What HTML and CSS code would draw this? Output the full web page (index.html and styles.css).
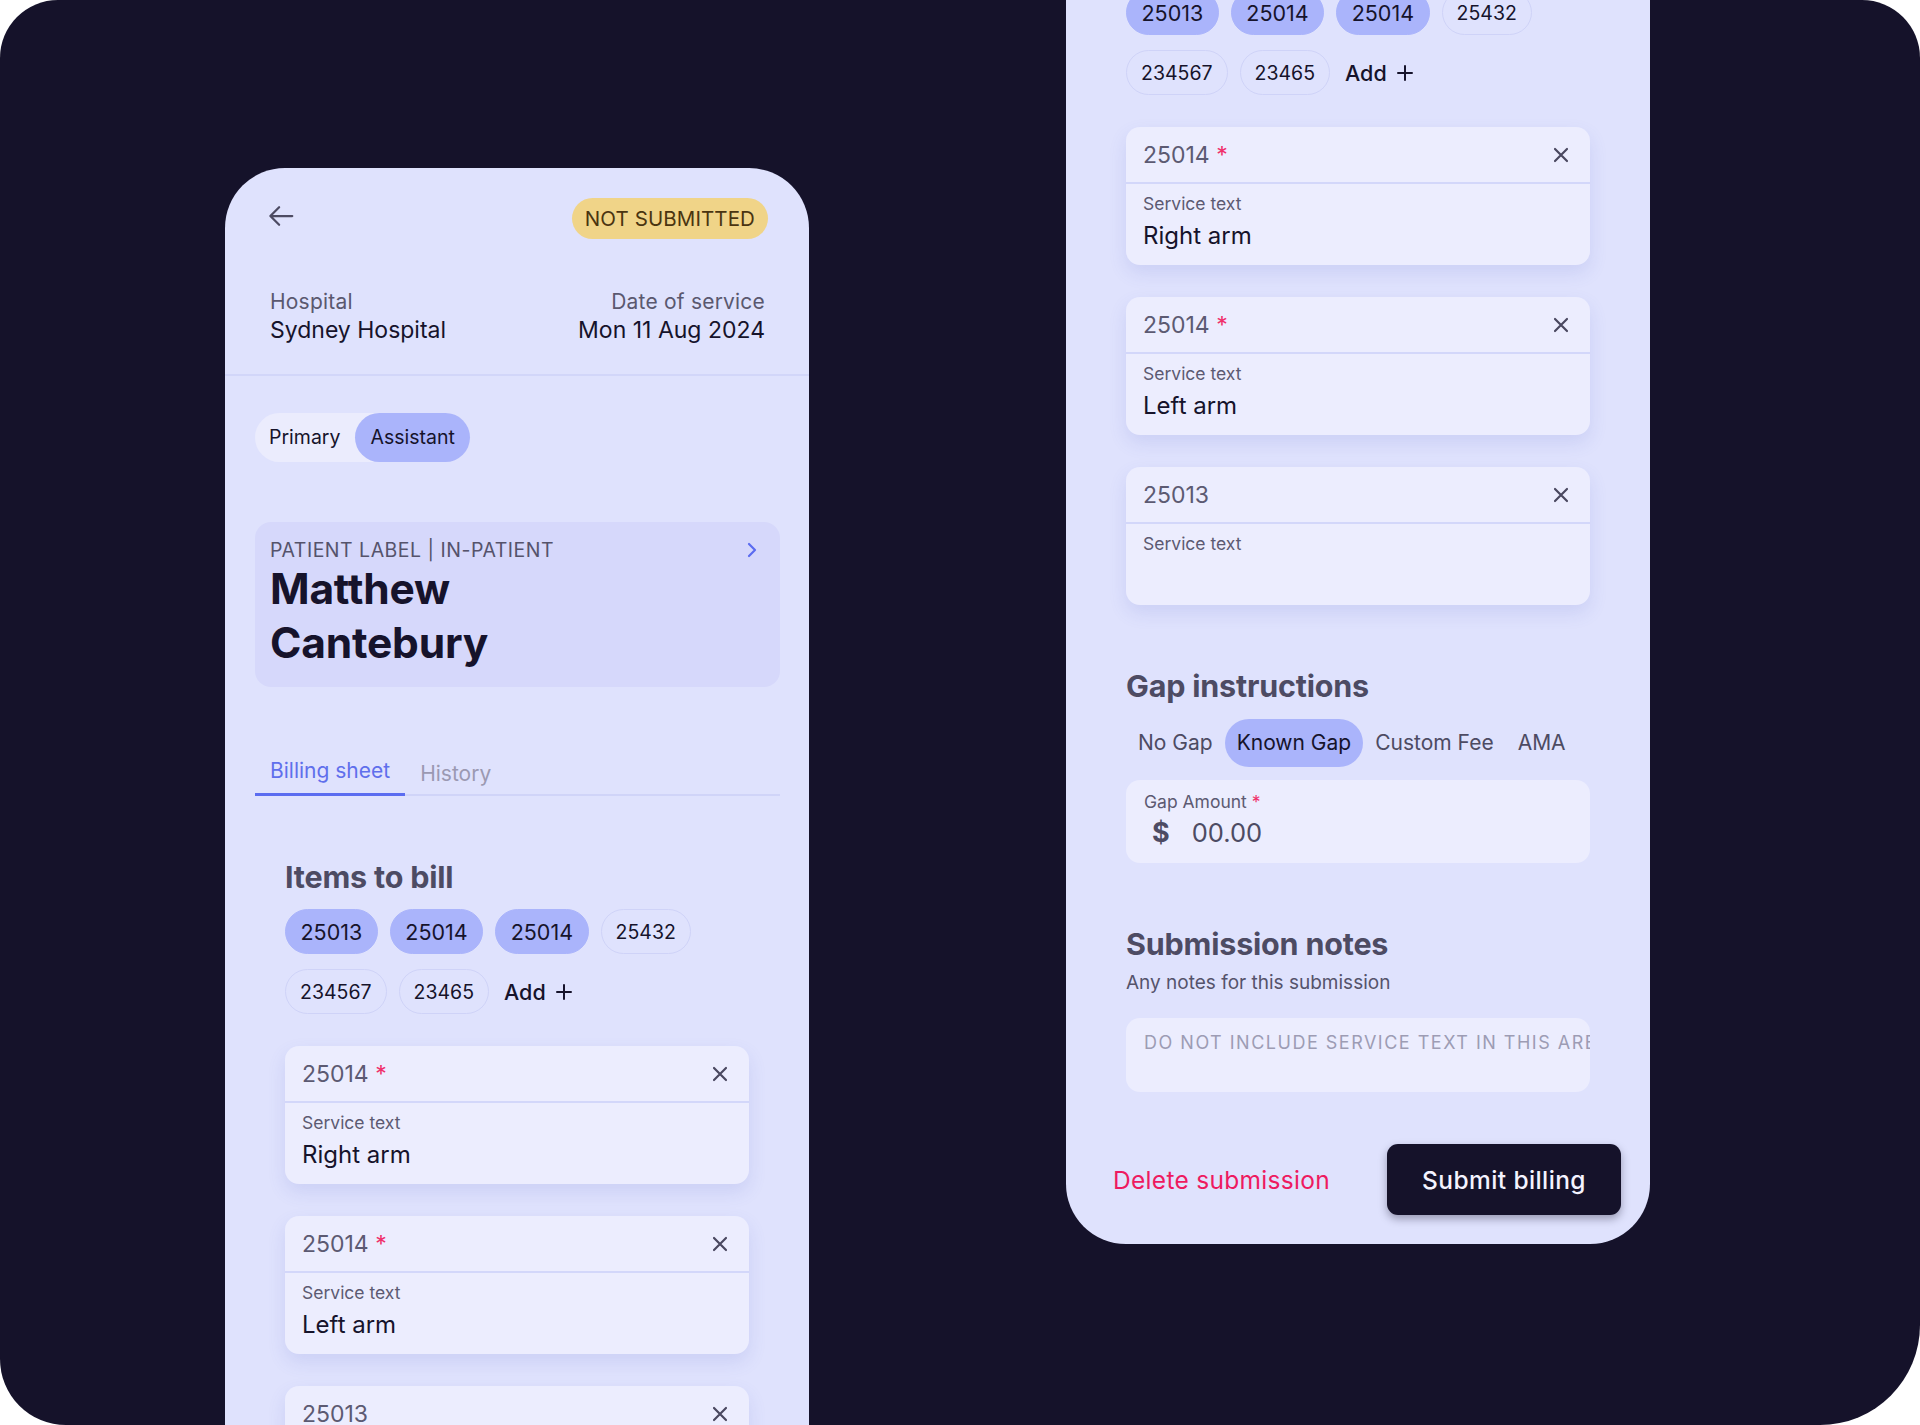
FILE: index.html
```html
<!DOCTYPE html>
<html lang="en">
<head>
    <meta charset="UTF-8">
    <meta name="viewport" content="width=device-width, initial-scale=1.0">
    <title>Billing sheet</title>
    <link rel="stylesheet" href="styles.css">
</head>
<body>
<div class="canvas">

    <!-- screen 1: top of the billing sheet -->
    <div class="phone">
        <header class="top-bar">
            <button class="back-btn" aria-label="Back">
                <svg width="30" height="30" viewBox="0 0 24 24"><path d="M21 12H3.5M10.5 5 3.5 12l7 7" fill="none" stroke="currentColor" stroke-width="1.8" stroke-linecap="round" stroke-linejoin="round"/></svg>
            </button>
            <span class="status">NOT SUBMITTED</span>
        </header>
        <div class="visit-info">
            <div>
                <div class="info-label">Hospital</div>
                <div class="info-value">Sydney Hospital</div>
            </div>
            <div class="align-right">
                <div class="info-label">Date of service</div>
                <div class="info-value">Mon 11 Aug 2024</div>
            </div>
        </div>
        <div class="phone-body">
            <div class="role-toggle">
                <span class="role first">Primary</span>
                <span class="role active">Assistant</span>
            </div>
            <div class="patient-card">
                <div class="patient-meta">
                    <span>PATIENT LABEL | IN-PATIENT</span>
                    <svg class="chevron" width="12" height="18" viewBox="0 0 12 18"><path d="M3 3l6 6-6 6" fill="none" stroke="currentColor" stroke-width="2.2" stroke-linecap="round" stroke-linejoin="round"/></svg>
                </div>
                <div class="patient-name">Matthew<br>Cantebury</div>
            </div>
            <div class="tabs">
                <span class="tab active">Billing sheet</span>
                <span class="tab">History</span>
            </div>

            <section class="section">
                <h2>Items to bill</h2>
                <div class="chips">
                    <span class="chip selected">25013</span>
                    <span class="chip selected">25014</span>
                    <span class="chip selected">25014</span>
                    <span class="chip">25432</span>
                    <span class="chip">234567</span>
                    <span class="chip">23465</span>
                    <span class="chip add">Add <svg width="20" height="20" viewBox="0 0 20 20"><path d="M10 3v14M3 10h14" stroke="currentColor" stroke-width="2" stroke-linecap="round"/></svg></span>
                </div>
                <div class="service-card">
                    <div class="service-head">
                        <span>25014 <span class="req">*</span></span>
                        <svg class="close" width="20" height="20" viewBox="0 0 20 20"><path d="M4 4l12 12M16 4 4 16" stroke="currentColor" stroke-width="2.2" stroke-linecap="round"/></svg>
                    </div>
                    <div class="service-body">
                        <div class="field-label">Service text</div>
                        <div class="field-value">Right arm</div>
                    </div>
                </div>
                <div class="service-card">
                    <div class="service-head">
                        <span>25014 <span class="req">*</span></span>
                        <svg class="close" width="20" height="20" viewBox="0 0 20 20"><path d="M4 4l12 12M16 4 4 16" stroke="currentColor" stroke-width="2.2" stroke-linecap="round"/></svg>
                    </div>
                    <div class="service-body">
                        <div class="field-label">Service text</div>
                        <div class="field-value">Left arm</div>
                    </div>
                </div>
                <div class="service-card">
                    <div class="service-head">
                        <span>25013</span>
                        <svg class="close" width="20" height="20" viewBox="0 0 20 20"><path d="M4 4l12 12M16 4 4 16" stroke="currentColor" stroke-width="2.2" stroke-linecap="round"/></svg>
                    </div>
                    <div class="service-body">
                        <div class="field-label">Service text</div>
                    </div>
                </div>
            </section>
        </div>
    </div>

    <!-- screen 2: same sheet scrolled to the bottom -->
    <div class="phone scrolled">
        <header class="top-bar">
            <button class="back-btn" aria-label="Back">
                <svg width="30" height="30" viewBox="0 0 24 24"><path d="M21 12H3.5M10.5 5 3.5 12l7 7" fill="none" stroke="currentColor" stroke-width="1.8" stroke-linecap="round" stroke-linejoin="round"/></svg>
            </button>
            <span class="status">NOT SUBMITTED</span>
        </header>
        <div class="visit-info">
            <div>
                <div class="info-label">Hospital</div>
                <div class="info-value">Sydney Hospital</div>
            </div>
            <div class="align-right">
                <div class="info-label">Date of service</div>
                <div class="info-value">Mon 11 Aug 2024</div>
            </div>
        </div>
        <div class="phone-body">
            <div class="role-toggle">
                <span class="role first">Primary</span>
                <span class="role active">Assistant</span>
            </div>
            <div class="patient-card">
                <div class="patient-meta">
                    <span>PATIENT LABEL | IN-PATIENT</span>
                    <svg class="chevron" width="12" height="18" viewBox="0 0 12 18"><path d="M3 3l6 6-6 6" fill="none" stroke="currentColor" stroke-width="2.2" stroke-linecap="round" stroke-linejoin="round"/></svg>
                </div>
                <div class="patient-name">Matthew<br>Cantebury</div>
            </div>
            <div class="tabs">
                <span class="tab active">Billing sheet</span>
                <span class="tab">History</span>
            </div>

            <section class="section">
                <h2>Items to bill</h2>
                <div class="chips">
                    <span class="chip selected">25013</span>
                    <span class="chip selected">25014</span>
                    <span class="chip selected">25014</span>
                    <span class="chip">25432</span>
                    <span class="chip">234567</span>
                    <span class="chip">23465</span>
                    <span class="chip add">Add <svg width="20" height="20" viewBox="0 0 20 20"><path d="M10 3v14M3 10h14" stroke="currentColor" stroke-width="2" stroke-linecap="round"/></svg></span>
                </div>
                <div class="service-card">
                    <div class="service-head">
                        <span>25014 <span class="req">*</span></span>
                        <svg class="close" width="20" height="20" viewBox="0 0 20 20"><path d="M4 4l12 12M16 4 4 16" stroke="currentColor" stroke-width="2.2" stroke-linecap="round"/></svg>
                    </div>
                    <div class="service-body">
                        <div class="field-label">Service text</div>
                        <div class="field-value">Right arm</div>
                    </div>
                </div>
                <div class="service-card">
                    <div class="service-head">
                        <span>25014 <span class="req">*</span></span>
                        <svg class="close" width="20" height="20" viewBox="0 0 20 20"><path d="M4 4l12 12M16 4 4 16" stroke="currentColor" stroke-width="2.2" stroke-linecap="round"/></svg>
                    </div>
                    <div class="service-body">
                        <div class="field-label">Service text</div>
                        <div class="field-value">Left arm</div>
                    </div>
                </div>
                <div class="service-card">
                    <div class="service-head">
                        <span>25013</span>
                        <svg class="close" width="20" height="20" viewBox="0 0 20 20"><path d="M4 4l12 12M16 4 4 16" stroke="currentColor" stroke-width="2.2" stroke-linecap="round"/></svg>
                    </div>
                    <div class="service-body">
                        <div class="field-label">Service text</div>
                    </div>
                </div>
            </section>

            <section class="section">
                <h2>Gap instructions</h2>
                <div class="gap-options">
                    <span class="gap-option">No Gap</span>
                    <span class="gap-option active">Known Gap</span>
                    <span class="gap-option">Custom Fee</span>
                    <span class="gap-option">AMA</span>
                </div>
                <div class="amount-field">
                    <div class="field-label">Gap Amount <span class="req">*</span></div>
                    <div class="amount-row">
                        <span class="currency">$</span>
                        <span class="amount">00.00</span>
                    </div>
                </div>
            </section>

            <section class="section">
                <h2>Submission notes</h2>
                <p class="hint">Any notes for this submission</p>
                <div class="notes-box">DO NOT INCLUDE SERVICE TEXT IN THIS AREA</div>
            </section>

            <div class="actions">
                <button class="delete-btn">Delete submission</button>
                <button class="submit-btn">Submit billing</button>
            </div>
        </div>
    </div>

</div>
</body>
</html>
```

FILE: styles.css
```css
* {
    box-sizing: border-box;
    margin: 0;
    padding: 0;
}
html, body {
    background: #fff;
}
body {
    font-family: Inter, "Noto Sans", "DejaVu Sans", sans-serif;
    color: #16132b;
}
button {
    font-family: inherit;
    border: none;
    background: none;
    cursor: pointer;
}
.canvas {
    width: 1920px;
    height: 1425px;
    background-color: #15122a;
    border-radius: 58px 58px 100px 66px;
    overflow: hidden;
    display: flex;
    align-items: flex-start;
    gap: 257px;
    padding-left: 225px;
}
.phone {
    flex: none;
    width: 584px;
    margin-top: 168px;
    background-color: #dfe2fd;
    border-radius: 60px;
}
.phone.scrolled {
    margin-top: -751px;
}

/* header */
.top-bar {
    display: flex;
    justify-content: space-between;
    align-items: center;
    padding: 30px 41px 0 41px;
}
.back-btn {
    display: flex;
    color: #4d4b63;
    height: 41px;
    align-items: center;
    margin-top: -5px;
}
.status {
    height: 41px;
    line-height: 41px;
    padding: 0 13px;
    border-radius: 21px;
    background-color: #f0d488;
    color: #4a3410;
    font-size: 20.5px;
    letter-spacing: 0.1px;
}
.visit-info {
    display: flex;
    justify-content: space-between;
    padding: 50px 44px 28px 45px;
    border-bottom: 2px solid #d2d6f9;
}
.align-right {
    text-align: right;
}
.info-label {
    font-size: 21px;
    line-height: 25px;
    color: #5a586f;
    letter-spacing: 0.2px;
}
.info-value {
    font-size: 23px;
    line-height: 32px;
    color: #16132b;
}

.phone-body {
    padding: 37px 29px 0 30px;
}
.role-toggle {
    display: inline-flex;
    height: 49px;
    border-radius: 25px;
    background-color: #ebecfd;
}
.role {
    padding: 0 15px;
    line-height: 49px;
    font-size: 19.5px;
    border-radius: 25px;
}
.role.first {
    padding-left: 14px;
}
.role.active {
    background-color: #aab4fb;
}

.patient-card {
    margin-top: 60px;
    padding: 16px 15px 17px;
    border-radius: 16px;
    background-color: #d6d8fb;
}
.patient-meta {
    display: flex;
    justify-content: space-between;
    align-items: center;
    font-size: 19.5px;
    line-height: 24px;
    letter-spacing: 0.5px;
    color: #55536b;
}
.chevron {
    color: #5b6cf0;
    margin-right: 7px;
}
.patient-name {
    font-size: 42.5px;
    font-weight: 700;
    line-height: 54px;
    letter-spacing: -0.2px;
}

.tabs {
    display: flex;
    margin-top: 72px;
    border-bottom: 2px solid #d0d4f8;
}
.tab {
    padding: 0 15px 10px;
    margin-bottom: -2px;
    font-size: 21px;
    line-height: 24px;
    color: #9b99b2;
    border-bottom: 3px solid transparent;
}
.tab + .tab {
    padding-top: 3px;
    padding-bottom: 7px;
}
.tab.active {
    color: #5f6fec;
    border-bottom-color: #5b6cf0;
}

/* sections */
.section {
    margin-top: 63px;
    padding: 0 31px 0 30px;
}
.section h2 {
    font-size: 30.5px;
    font-weight: 700;
    line-height: 36px;
    color: #4d4b63;
    letter-spacing: -0.2px;
}
.chips {
    display: flex;
    flex-wrap: wrap;
    gap: 15px 12px;
    margin-top: 14px;
}
.chip {
    display: inline-flex;
    align-items: center;
    height: 45px;
    padding: 0 14px;
    border: 1.5px solid #cfd3f8;
    border-radius: 23px;
    font-size: 19.5px;
}
.chip.selected {
    background-color: #aab4fb;
    border-color: #aab4fb;
    font-size: 21.5px;
    padding: 0 14.5px;
}
.chip.add {
    border: none;
    padding: 0 3px;
    gap: 8px;
    font-size: 21.5px;
    font-weight: 500;
}

.service-card {
    margin-top: 32px;
    border-radius: 14px;
    background-color: #ecedfe;
    box-shadow: 0 8px 18px rgba(88, 98, 200, 0.14);
    overflow: hidden;
}
.service-head {
    display: flex;
    justify-content: space-between;
    align-items: center;
    height: 57px;
    padding: 0 19px 0 17px;
    border-bottom: 2px solid #d3d7fa;
    font-size: 23px;
    color: #5c5a72;
}
.req {
    color: #f0306a;
}
.close {
    color: #4a4860;
}
.service-body {
    min-height: 81px;
    padding: 10px 17px 14px;
}
.field-label {
    font-size: 17.5px;
    line-height: 20px;
    color: #5c5a72;
}
.field-value {
    margin-top: 7px;
    font-size: 24px;
    line-height: 30px;
}

/* gap */
.gap-options {
    display: flex;
    margin-top: 15px;
}
.gap-option {
    height: 48px;
    line-height: 48px;
    padding: 0 12px;
    border-radius: 24px;
    font-size: 21px;
    color: #4d4b63;
}
.gap-option.active {
    background-color: #aab4fb;
    color: #16132b;
}
.amount-field {
    margin-top: 13px;
    padding: 12px 18px 14px;
    border-radius: 14px;
    background-color: #ecedfe;
}
.amount-row {
    display: flex;
    align-items: center;
    gap: 22px;
    margin-top: 5px;
    padding-left: 8px;
    line-height: 32px;
    color: #4d4b63;
}
.currency {
    font-size: 27px;
    font-weight: 700;
}
.amount {
    font-size: 25.5px;
}

/* notes */
.hint {
    margin-top: 9px;
    font-size: 19px;
    line-height: 24px;
    color: #55536b;
}
.notes-box {
    margin-top: 23px;
    height: 74px;
    padding: 14px 0 0 18px;
    border-radius: 14px;
    background-color: #ecedfe;
    font-size: 18px;
    line-height: 22px;
    letter-spacing: 1.5px;
    color: #9d9cb4;
    white-space: nowrap;
    overflow: hidden;
}

.actions {
    display: flex;
    justify-content: space-between;
    align-items: center;
    margin-top: 52px;
    padding: 0 0 29px 17px;
}
.delete-btn {
    font-size: 24.5px;
    color: #ee1a60;
    letter-spacing: 0.3px;
}
.submit-btn {
    width: 234px;
    height: 71px;
    border-radius: 11px;
    background-color: #15122a;
    color: #f4f3ff;
    font-size: 24.5px;
    font-weight: 500;
    letter-spacing: 0.4px;
    box-shadow: 0 4px 8px rgba(20, 18, 42, 0.35);
}
```
